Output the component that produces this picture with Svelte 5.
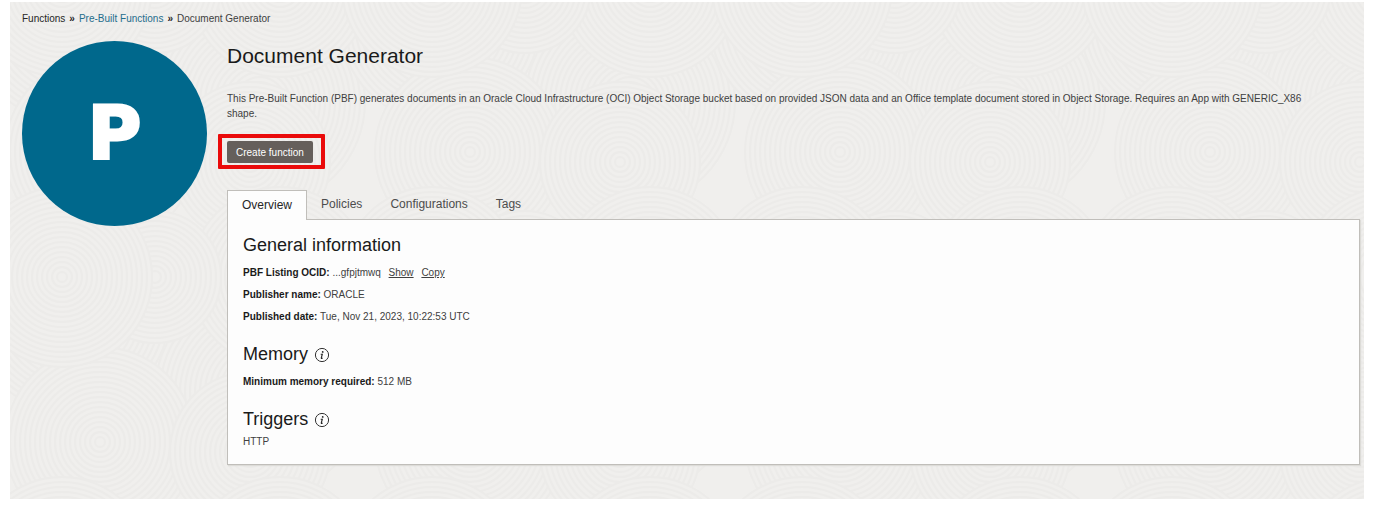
<script>
	let activeTab = 'Overview';
	const tabs = ['Overview', 'Policies', 'Configurations', 'Tags'];

	const details = [
		{ label: 'Publisher name', value: 'ORACLE' },
		{ label: 'Published date', value: 'Tue, Nov 21, 2023, 10:22:53 UTC' }
	];

	// Background swirls: discs of rings, repeated over a wide tile
	const tileWidth = 370;
	const tileHeight = 290;
	const swirls = [
		{ x: 250, y: 100, r: 105 },
		{ x: 60, y: 20, r: 100 },
		{ x: 90, y: 150, r: 95 },
		{ x: 240, y: 160, r: 80 },
		{ x: 270, y: 275, r: 90 },
		{ x: 145, y: 275, r: 66 },
		{ x: 52, y: 275, r: 90 }
	];
	const discs = swirls.flatMap((s) =>
		[-tileWidth, 0, tileWidth].flatMap((dx) =>
			[-tileHeight, 0, tileHeight].map((dy) => ({ x: s.x + dx, y: s.y + dy, r: s.r }))
		)
	);

	function rings(r) {
		return Array.from({ length: Math.floor(r / 5) }, (_, i) => r - i * 5);
	}
</script>

<div class="page">
	<svg class="texture" aria-hidden="true">
		<defs>
			<pattern id="swirls" width={tileWidth} height={tileHeight} patternUnits="userSpaceOnUse">
				{#each discs as d}
					<circle cx={d.x} cy={d.y} r={d.r} class="disc" />
					{#each rings(d.r) as r}
						<circle cx={d.x} cy={d.y} {r} class="ring" />
					{/each}
				{/each}
			</pattern>
		</defs>
		<rect width="100%" height="100%" fill="url(#swirls)" />
	</svg>

	<nav class="breadcrumb" aria-label="Breadcrumb">
		<a class="root" href="#functions">Functions</a>
		<b>»</b>
		<a href="#pre-built">Pre-Built Functions</a>
		<b>»</b>
		<span>Document Generator</span>
	</nav>

	<div class="layout">
		<div class="avatar">P</div>

		<main>
			<h1>Document Generator</h1>
			<p class="description">
				This Pre-Built Function (PBF) generates documents in an Oracle Cloud Infrastructure (OCI) Object
				Storage bucket based on provided JSON data and an Office template document stored in Object
				Storage. Requires an App with GENERIC_X86 shape.
			</p>

			<div class="action">
				<button class="create">Create function</button>
			</div>

			<div class="tabs" role="tablist">
				{#each tabs as tab}
					<button
						class="tab {activeTab === tab ? 'active' : ''}"
						role="tab"
						aria-selected={activeTab === tab}
						on:click={() => (activeTab = tab)}>{tab}</button
					>
				{/each}
			</div>

			<div class="panel" role="tabpanel">
				{#if activeTab === 'Overview'}
					<section>
						<h2>General information</h2>
						<div class="rows">
							<p>
								<strong>PBF Listing OCID:</strong> ...gfpjtmwq
								<button class="link">Show</button>
								<button class="link">Copy</button>
							</p>
							{#each details as d}
								<p><strong>{d.label}:</strong> {d.value}</p>
							{/each}
						</div>
					</section>

					<section>
						<h2>Memory {@render info()}</h2>
						<div class="rows">
							<p><strong>Minimum memory required:</strong> 512 MB</p>
						</div>
					</section>

					<section>
						<h2>Triggers {@render info()}</h2>
						<p>HTTP</p>
					</section>
				{/if}
			</div>
		</main>
	</div>
</div>

{#snippet info()}
	<svg class="info" viewBox="0 0 16 16" aria-hidden="true">
		<circle cx="8" cy="8" r="6.6" fill="none" stroke="#333" stroke-width="1" />
		<circle cx="8.7" cy="4.9" r="0.9" fill="#222" />
		<path
			d="M6.7 7.2h1.6L7.3 10.9q-.1.6.4.5l.9-.5"
			fill="none"
			stroke="#222"
			stroke-width="1.1"
		/>
	</svg>
{/snippet}

<style>
	:global(body) {
		background: #fff;
		font-family: 'Liberation Sans', Arial, sans-serif;
		font-size: 10px;
		color: #404040;
	}

	.page {
		position: relative;
		margin: 2px 11px 8px 10px;
		padding: 10px 4px 34px 12px;
		background: #f0efed;
	}
	.texture {
		position: absolute;
		inset: 0;
		width: 100%;
		height: 100%;
	}
	.disc {
		fill: #f0efed;
	}
	.ring {
		fill: none;
		stroke: #ecebe9;
		stroke-width: 2;
	}

	/* Breadcrumb */
	.breadcrumb {
		position: relative;
		display: flex;
		gap: 4px;
		line-height: 14px;
	}
	.breadcrumb a {
		color: #1f6d8c;
		text-decoration: none;
	}
	.breadcrumb .root {
		color: #262626;
	}
	.breadcrumb b {
		color: #262626;
	}

	.layout {
		position: relative;
		display: flex;
		align-items: flex-start;
		gap: 20px;
		margin-top: 15px;
	}
	.avatar {
		flex: none;
		width: 185px;
		height: 185px;
		border-radius: 50%;
		background: #00688c;
		color: #fff;
		font-family: 'DejaVu Sans', sans-serif;
		font-size: 73px;
		font-weight: 700;
		line-height: 185px;
		text-align: center;
		-webkit-text-stroke: 3px #fff;
	}
	main {
		flex: 1;
		min-width: 0;
		padding-top: 2px;
	}
	h1 {
		margin: 0;
		font-size: 21px;
		font-weight: 400;
		line-height: 26px;
		color: #1a1a1a;
	}
	.description {
		margin: 22px 0 20px;
		padding-right: 30px;
		line-height: 15px;
	}

	/* Highlighted action */
	.action {
		position: relative;
		width: fit-content;
		margin-bottom: 27px;
	}
	.action::after {
		content: '';
		position: absolute;
		inset: -7px -12px -6px -9px;
		border: 4px solid #ea0a0a;
		border-radius: 1px;
		pointer-events: none;
	}
	button {
		font-family: inherit;
		cursor: pointer;
	}
	.create {
		display: block;
		height: 22px;
		padding: 0 9px;
		border: none;
		border-radius: 2px;
		background: #655f5b;
		color: #fff;
		font-size: 10px;
	}

	/* Tabs */
	.tabs {
		display: flex;
		margin-bottom: -1px;
	}
	.tab {
		position: relative;
		height: 30px;
		padding: 0 14px 3px;
		border: none;
		background: none;
		color: #4d4d4d;
		font-size: 12px;
	}
	.tab.active {
		padding-bottom: 2px;
		border: 1px solid #c0beba;
		border-bottom: none;
		background: #fdfdfd;
		color: #262626;
	}

	.panel {
		padding: 13px 15px 11px;
		border: 1px solid #c0beba;
		background: #fdfdfd;
		box-shadow: 1px 1px 1px #dddcd8;
	}
	section + section {
		margin-top: 14px;
	}
	h2 {
		display: flex;
		align-items: center;
		gap: 6px;
		margin: 0;
		font-size: 18px;
		font-weight: 400;
		line-height: 24px;
		color: #1a1a1a;
	}
	.rows {
		margin-top: 5px;
	}
	section p {
		margin: 0;
		line-height: 22px;
	}
	strong {
		color: #1a1a1a;
	}
	.link {
		margin-left: 5px;
		padding: 0;
		border: none;
		background: none;
		color: #404040;
		font-size: 10px;
		text-decoration: underline;
	}
	.info {
		width: 16px;
		height: 16px;
		margin-top: 2px;
	}
</style>
